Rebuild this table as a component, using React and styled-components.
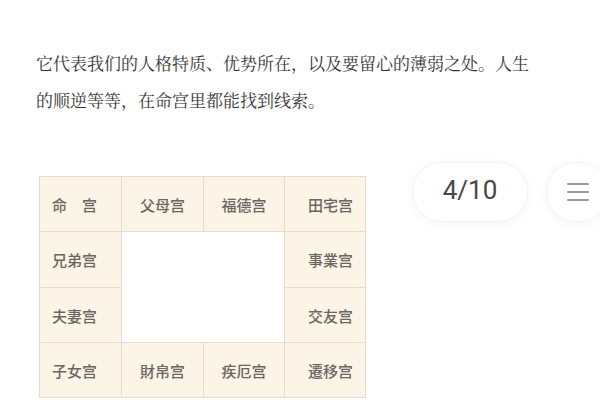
import React from "react";
import styled, { createGlobalStyle } from "styled-components";

const Global = createGlobalStyle`
  html, body { margin: 0; padding: 0; background: #ffffff; }
  body { width: 600px; height: 400px; overflow: hidden; }
`;

const Page = styled.div`
  position: relative;
  width: 600px;
  height: 400px;
  overflow: hidden;
  padding: 44px 0 0 36px;
  box-sizing: border-box;
`;

const Paragraph = styled.p`
  margin: 0;
  width: 500px;
  font-family: "Noto Serif CJK SC", "Noto Sans CJK SC", serif;
  font-size: 17px;
  line-height: 37px;
  color: #363636;
`;

const Board = styled.div`
  margin: 58px 0 0 3px;
  display: grid;
  grid-template-columns: 82px 82px 81px 81px;
  grid-template-rows: 55px 56px 55px 55px;
  width: 327px;
  border-top: 1px solid #e4dccd;
  border-left: 1px solid #e4dccd;
  box-sizing: border-box;
`;

const Cell = styled.div`
  display: flex;
  align-items: center;
  justify-content: ${(p) => p.$align};
  padding: 0 12px;
  background: #fcf4e6;
  border-right: 1px solid #e4dccd;
  border-bottom: 1px solid #e4dccd;
  font-family: "Noto Sans CJK SC", sans-serif;
  font-size: 15px;
  font-weight: 500;
  color: #6a6763;
  white-space: pre;
`;

const Center = styled.div`
  grid-column: 2 / 4;
  grid-row: 2 / 4;
  background: #ffffff;
  border-right: 1px solid #e4dccd;
  border-bottom: 1px solid #e4dccd;
`;

const Floating = styled.div`
  position: absolute;
  top: 162px;
  left: 412px;
  display: flex;
  gap: 18px;
`;

const Pill = styled.div`
  height: 60px;
  width: ${(p) => p.$w}px;
  border-radius: 30px;
  background: #ffffff;
  border: 1px solid #f4f4f4;
  box-shadow: 0 2px 12px rgba(0, 0, 0, 0.04);
  box-sizing: border-box;
  display: flex;
  flex-direction: column;
  align-items: center;
  justify-content: center;
  gap: 6px;
`;

const Counter = styled.span`
  font-family: Roboto, "Liberation Sans", sans-serif;
  font-size: 26px;
  color: #474747;
  margin-top: -4px;
`;

const Line = styled.span`
  display: block;
  width: 22px;
  height: 2px;
  background: #9a9a9a;
  border-radius: 1px;
`;

const cells = [
  { t: "命　宫", a: "flex-start" },
  { t: "父母宫", a: "center" },
  { t: "福德宫", a: "center" },
  { t: "田宅宫", a: "flex-end" },
  { t: "兄弟宫", a: "flex-start" },
  { t: "事業宫", a: "flex-end" },
  { t: "夫妻宫", a: "flex-start" },
  { t: "交友宫", a: "flex-end" },
  { t: "子女宫", a: "flex-start" },
  { t: "財帛宫", a: "center" },
  { t: "疾厄宫", a: "center" },
  { t: "遷移宫", a: "flex-end" },
];

export default function App() {
  return (
    <>
      <Global />
      <Page>
        <Paragraph>
          它代表我们的人格特质、优势所在，以及要留心的薄弱之处。人生的顺逆等等，在命宫里都能找到线索。
        </Paragraph>
        <Board>
          {cells.slice(0, 5).map((c) => (
            <Cell key={c.t} $align={c.a}>{c.t}</Cell>
          ))}
          <Center />
          {cells.slice(5).map((c) => (
            <Cell key={c.t} $align={c.a}>{c.t}</Cell>
          ))}
        </Board>
        <Floating>
          <Pill $w={116}>
            <Counter>4/10</Counter>
          </Pill>
          <Pill $w={64}>
            <Line />
            <Line />
            <Line />
          </Pill>
        </Floating>
      </Page>
    </>
  );
}
